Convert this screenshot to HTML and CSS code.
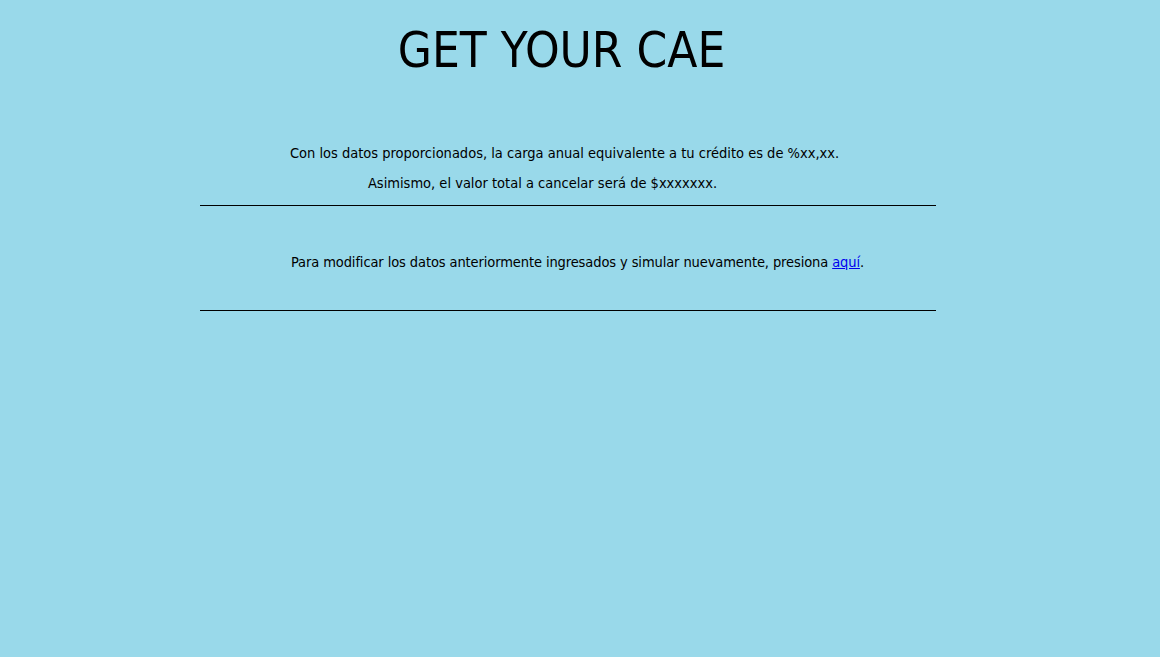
FILE: index.html
```html
<!DOCTYPE html>
<html lang="es">
<head>
<meta charset="utf-8">
<title>GET YOUR CAE</title>
<link rel="stylesheet" href="styles.css">
</head>
<body>
<main class="page">
  <h1 class="title">GET YOUR CAE</h1>
  <section class="result">
    <p class="line line-cae">Con los datos proporcionados, la carga anual equivalente a tu crédito es de %xx,xx.</p>
    <p class="line line-total">Asimismo, el valor total a cancelar será de $xxxxxxx.</p>
  </section>
  <hr class="rule">
  <section class="again">
    <p class="line line-again">Para modificar los datos anteriormente ingresados y simular nuevamente, presiona <a href="#" class="link">aquí</a>.</p>
  </section>
  <hr class="rule">
</main>
</body>
</html>
```

FILE: styles.css
```css
html, body {
  margin: 0;
  padding: 0;
  background: #99d9ea;
}
body {
  font-family: "DejaVu Sans Condensed", "DejaVu Sans", sans-serif;
  color: #000;
}
.page {
  width: 736px;
  margin-left: 200px;
  padding-top: 22px;
}
.title {
  margin: 0;
  font-weight: normal;
  font-size: 49px;
  line-height: 58px;
  text-align: center;
  padding-right: 13px;
}
.result {
  padding-top: 58px;
  padding-bottom: 7px;
}
.line {
  margin: 0;
  font-size: 14.5px;
  line-height: 30px;
  text-align: center;
}
.line-cae {
  padding-right: 7px;
}
.line-total {
  padding-right: 51px;
}
.line-again {
  padding-left: 19px;
  letter-spacing: -0.1px;
}
.rule {
  margin: 0;
  border: 0;
  border-top: 1px solid #000;
  height: 0;
}
.again {
  padding: 41px 0 33px;
}
.link {
  color: #0000ee;
}
```
